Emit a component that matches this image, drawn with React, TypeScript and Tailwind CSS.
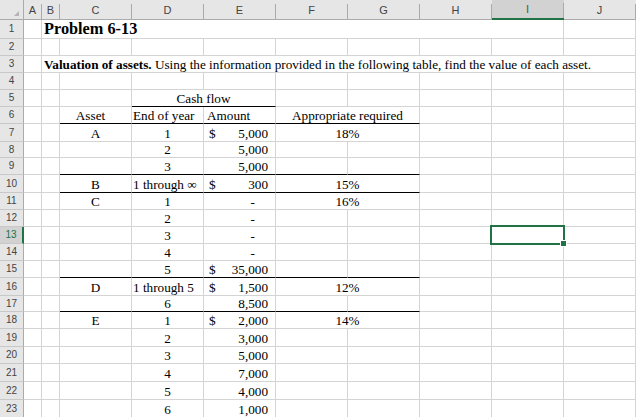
import React from "react";

function ColHead({ label, w, sel }: { label: string; w: string; sel?: boolean }) {
  return (
    <div
      className={`${w} shrink-0 h-full flex box-border ${
        sel ? "bg-[#d2d2d2] border-b-2 border-b-[#217346] text-[#217346]" : "bg-[#e6e6e6] border-b border-b-[#ababab] text-[#444444]"
      }`}
    >
      <div className="flex-1 flex items-center justify-center text-[11px] leading-none font-['Liberation_Sans',Arial,sans-serif] pt-[1px]">
        {label}
      </div>
      <div className="w-[1px] h-[15px] self-end bg-[#ababab]" />
    </div>
  );
}

function RowHead({ n, sel }: { n: number; sel?: boolean }) {
  return (
    <div
      className={`w-[24px] shrink-0 h-full box-border border-b border-b-[#c8c8c8] flex items-center justify-center text-[10px] leading-none font-['Liberation_Sans',Arial,sans-serif] ${
        sel ? "bg-[#d2d2d2] border-r-2 border-r-[#217346] text-[#217346]" : "bg-[#e6e6e6] border-r border-r-[#ababab] text-[#444444]"
      }`}
    >
      {n}
    </div>
  );
}

type CellProps = {
  w: string;
  children?: React.ReactNode;
  a?: "l" | "c" | "r";
  bb?: boolean;
  cls?: string;
};

function Cell({ w, children, a = "l", bb, cls = "" }: CellProps) {
  const align = a === "c" ? "justify-center" : a === "r" ? "justify-end" : "justify-start";
  return (
    <div
      className={`${w} shrink-0 h-full box-border border-r border-b border-r-[#d4d4d4] ${
        bb ? "border-b-black" : "border-b-[#d4d4d4]"
      } flex items-end ${align} whitespace-nowrap leading-[15px] ${cls}`}
    >
      {children}
    </div>
  );
}

type Amount = { dollar?: boolean; v?: string; dash?: boolean };

function Acct({ e, bb }: { e?: Amount; bb?: boolean }) {
  return (
    <div
      className={`w-[72px] shrink-0 h-full box-border border-r border-b border-r-[#d4d4d4] ${
        bb ? "border-b-black" : "border-b-[#d4d4d4]"
      } flex items-end justify-between pl-[5px] ${e?.dash ? "pr-[20px]" : "pr-[7px]"} whitespace-nowrap leading-[15px]`}
    >
      <span>{e?.dollar ? "$" : ""}</span>
      <span>{e?.dash ? "-" : e?.v ?? ""}</span>
    </div>
  );
}

type RowProps = {
  n: number;
  h: string;
  c?: string;
  d?: React.ReactNode;
  dLeft?: boolean;
  e?: Amount;
  fg?: string;
  bb?: boolean;
  sel?: boolean;
};

function DataRow({ n, h, c, d, dLeft, e, fg, bb, sel }: RowProps) {
  return (
    <div className={`flex ${h}`}>
      <RowHead n={n} sel={sel} />
      <Cell w="w-[18px]" />
      <Cell w="w-[18px]" />
      <Cell w="w-[72px]" a="c" bb={bb}>
        {c}
      </Cell>
      <Cell w="w-[72px]" a={dLeft ? "l" : "c"} bb={bb} cls={dLeft ? "pl-[1px]" : ""}>
        {d}
      </Cell>
      <Acct e={e} bb={bb} />
      {fg !== undefined ? (
        <Cell w="w-[144px]" a="c" bb={bb}>
          {fg}
        </Cell>
      ) : (
        <>
          <Cell w="w-[72px]" bb={bb} />
          <Cell w="w-[72px]" bb={bb} />
        </>
      )}
      <Cell w="w-[72px]" />
      {sel ? (
        <div className="relative w-[72px] shrink-0 h-full box-border border-r border-b border-r-[#d4d4d4] border-b-[#d4d4d4]">
          <div className="absolute left-[-2px] top-[-2px] w-[75px] h-[20px] border-2 border-[#217346]" />
          <div className="absolute left-[68px] top-[13px] w-[7px] h-[7px] bg-[#217346] border border-white" />
        </div>
      ) : (
        <Cell w="w-[72px]" />
      )}
      <Cell w="w-[72px]" />
    </div>
  );
}

function EmptyRow({ n, h }: { n: number; h: string }) {
  return <DataRow n={n} h={h} />;
}

export default function App() {
  return (
    <div className="w-[636px] h-[417px] overflow-hidden bg-white text-black text-[13.2px] font-['Liberation_Serif','Times_New_Roman',serif]">
      {/* column headers */}
      <div className="flex h-[20px]">
        <div className="w-[24px] shrink-0 h-full box-border bg-[#e6e6e6] border-r border-r-[#ababab] border-b border-b-[#ababab]">
          <svg width="23" height="19" viewBox="0 0 23 19">
            <polygon points="19,11 19,16 14,16" fill="#b4b4b4" />
          </svg>
        </div>
        <ColHead label="A" w="w-[18px]" />
        <ColHead label="B" w="w-[18px]" />
        <ColHead label="C" w="w-[72px]" />
        <ColHead label="D" w="w-[72px]" />
        <ColHead label="E" w="w-[72px]" />
        <ColHead label="F" w="w-[72px]" />
        <ColHead label="G" w="w-[72px]" />
        <ColHead label="H" w="w-[72px]" />
        <ColHead label="I" w="w-[72px]" sel />
        <ColHead label="J" w="w-[72px]" />
      </div>

      {/* row 1 */}
      <div className="flex h-[19px]">
        <RowHead n={1} />
        <Cell w="w-[18px]" />
        <Cell w="w-[522px]" cls="pl-[2px]">
          <span className="font-bold text-[16.3px] leading-[18px]">Problem 6-13</span>
        </Cell>
        <Cell w="w-[72px]" />
      </div>

      <EmptyRow n={2} h="h-[17px]" />

      {/* row 3 */}
      <div className="flex h-[17px]">
        <RowHead n={3} />
        <Cell w="w-[18px]" />
        <Cell w="w-[594px]" cls="pl-[2px]">
          <span>
            <span className="font-bold">Valuation of assets.</span>
            {"  "}Using the information provided in the following table, find the value of each asset.
          </span>
        </Cell>
      </div>

      <EmptyRow n={4} h="h-[17px]" />

      {/* row 5 */}
      <div className="flex h-[17px]">
        <RowHead n={5} />
        <Cell w="w-[18px]" />
        <Cell w="w-[18px]" />
        <Cell w="w-[72px]" />
        <Cell w="w-[144px]" a="c" bb>
          Cash flow
        </Cell>
        <Cell w="w-[72px]" />
        <Cell w="w-[72px]" />
        <Cell w="w-[72px]" />
        <Cell w="w-[72px]" />
        <Cell w="w-[72px]" />
      </div>

      {/* row 6 */}
      <div className="flex h-[17px]">
        <RowHead n={6} />
        <Cell w="w-[18px]" />
        <Cell w="w-[18px]" />
        <Cell w="w-[72px]" a="c" bb cls="pr-[10px]">
          Asset
        </Cell>
        <Cell w="w-[72px]" bb cls="pl-[1px]">
          End of year
        </Cell>
        <Cell w="w-[72px]" bb cls="pl-[3px]">
          Amount
        </Cell>
        <Cell w="w-[144px]" a="c" bb>
          Appropriate required
        </Cell>
        <Cell w="w-[72px]" />
        <Cell w="w-[72px]" />
        <Cell w="w-[72px]" />
      </div>

      <DataRow n={7} h="h-[18px]" c="A" d="1" e={{ dollar: true, v: "5,000" }} fg="18%" />
      <DataRow n={8} h="h-[16px]" d="2" e={{ v: "5,000" }} />
      <DataRow n={9} h="h-[17px]" d="3" e={{ v: "5,000" }} bb />
      <DataRow n={10} h="h-[18px]" c="B" d="1 through ∞" dLeft e={{ dollar: true, v: "300" }} fg="15%" bb />
      <DataRow n={11} h="h-[17px]" c="C" d="1" e={{ dash: true }} fg="16%" />
      <DataRow n={12} h="h-[17px]" d="2" e={{ dash: true }} />
      <DataRow n={13} h="h-[17px]" d="3" e={{ dash: true }} sel />
      <DataRow n={14} h="h-[17px]" d="4" e={{ dash: true }} />
      <DataRow n={15} h="h-[17px]" d="5" e={{ dollar: true, v: "35,000" }} bb />
      <DataRow n={16} h="h-[18px]" c="D" d="1 through 5" dLeft e={{ dollar: true, v: "1,500" }} fg="12%" />
      <DataRow n={17} h="h-[16px]" d="6" e={{ v: "8,500" }} bb />
      <DataRow n={18} h="h-[17px]" c="E" d="1" e={{ dollar: true, v: "2,000" }} fg="14%" />
      <DataRow n={19} h="h-[18px]" d="2" e={{ v: "3,000" }} />
      <DataRow n={20} h="h-[17px]" d="3" e={{ v: "5,000" }} />
      <DataRow n={21} h="h-[18px]" d="4" e={{ v: "7,000" }} />
      <DataRow n={22} h="h-[18px]" d="5" e={{ v: "4,000" }} />
      <DataRow n={23} h="h-[18px]" d="6" e={{ v: "1,000" }} />
    </div>
  );
}
